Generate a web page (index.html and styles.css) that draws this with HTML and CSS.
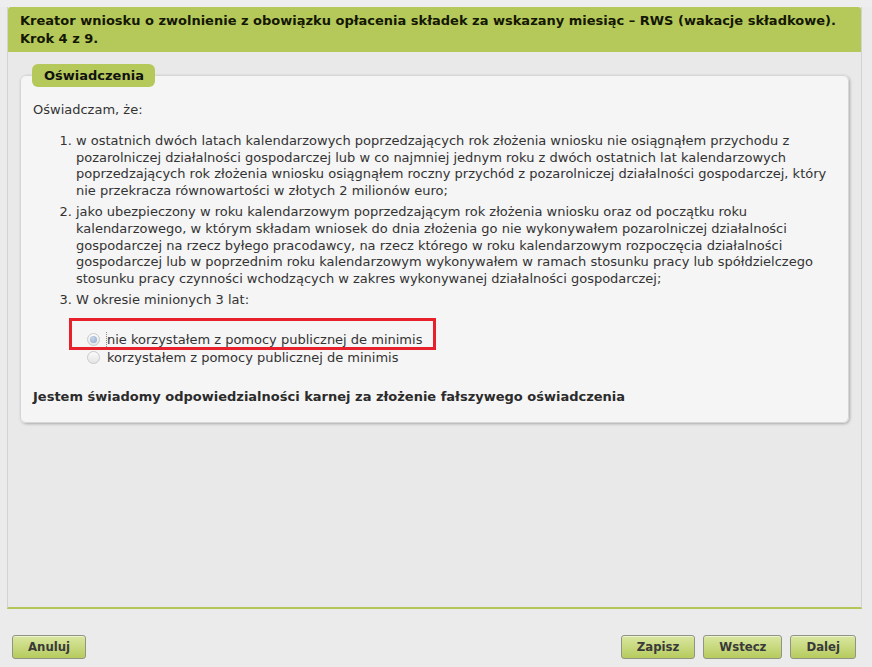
FILE: index.html
```html
<!DOCTYPE html>
<html lang="pl">
<head>
<meta charset="utf-8">
<title>Kreator wniosku RWS</title>
<link rel="stylesheet" href="styles.css">
</head>
<body>
<div class="topstrip"></div>
<div class="wizard">
  <div class="wizard-head">Kreator wniosku o zwolnienie z obowiązku opłacenia składek za wskazany miesiąc – RWS (wakacje składkowe). Krok 4 z 9.</div>
  <div class="wizard-body">
    <fieldset class="box">
      <legend class="box-title">Oświadczenia</legend>
      <p class="intro">Oświadczam, że:</p>
      <ol class="decl">
        <li>w ostatnich dwóch latach kalendarzowych poprzedzających rok złożenia wniosku nie osiągnąłem przychodu z pozarolniczej działalności gospodarczej lub w co najmniej jednym roku z dwóch ostatnich lat kalendarzowych poprzedzających rok złożenia wniosku osiągnąłem roczny przychód z pozarolniczej działalności gospodarczej, który nie przekracza równowartości w złotych 2 milionów euro;</li>
        <li>jako ubezpieczony w roku kalendarzowym poprzedzającym rok złożenia wniosku oraz od początku roku kalendarzowego, w którym składam wniosek do dnia złożenia go nie wykonywałem pozarolniczej działalności gospodarczej na rzecz byłego pracodawcy, na rzecz którego w roku kalendarzowym rozpoczęcia działalności gospodarczej lub w poprzednim roku kalendarzowym wykonywałem w ramach stosunku pracy lub spółdzielczego stosunku pracy czynności wchodzących w zakres wykonywanej działalności gospodarczej;</li>
        <li>W okresie minionych 3 lat:</li>
      </ol>
      <div class="choices">
        <label class="choice"><input type="radio" name="dm" checked disabled><span class="focus">nie korzystałem z pomocy publicznej de minimis</span></label>
        <label class="choice"><input type="radio" name="dm" disabled><span>korzystałem z pomocy publicznej de minimis</span></label>
        <div class="highlight"></div>
      </div>
      <p class="statement">Jestem świadomy odpowiedzialności karnej za złożenie fałszywego oświadczenia</p>
    </fieldset>
  </div>
</div>
<div class="actions">
  <button class="btn" type="button">Anuluj</button>
  <div class="actions-right">
    <button class="btn" type="button">Zapisz</button>
    <button class="btn" type="button">Wstecz</button>
    <button class="btn" type="button">Dalej</button>
  </div>
</div>
</body>
</html>
```

FILE: styles.css
```css
html, body {
  margin: 0;
  padding: 0;
}
body {
  background: #ebebeb;
  font-family: "DejaVu Sans", sans-serif;
  font-size: 13px;
  color: #333;
  height: 667px;
  overflow: hidden;
}
.topstrip {
  height: 7px;
  background: #eeeeee;
}
.wizard {
  margin: 0 10px 0 7px;
  border-left: 1px solid #d2d2d2;
  border-right: 1px solid #d2d2d2;
  border-bottom: 2px solid #b3c657;
  background: #e9e9e9;
}
.wizard-head {
  background: #b5c95a;
  border-radius: 3px 3px 0 0;
  color: #141703;
  font-weight: bold;
  font-size: 13px;
  line-height: 18px;
  padding: 5px 12px 4px 12px;
}
.wizard-body {
  padding: 12px 12px 184px 12px;
}
.box {
  margin: 0;
  padding: 0 12px 17px 12px;
  border: 1px solid #d6d6d6;
  border-radius: 6px;
  background: #f5f5f5;
  box-shadow: 1px 1px 3px rgba(0, 0, 0, 0.28);
  min-width: 0;
}
.box-title {
  background: #b5c95a;
  border-radius: 6px;
  padding: 0 11px 0 12px;
  margin-left: -1px;
  font-weight: bold;
  font-size: 13px;
  line-height: 23px;
  color: #111;
}
.intro {
  margin: 14px 0 0 0;
  line-height: 17px;
}
.decl {
  margin: 15px 0 0 0;
  padding-left: 43px;
  line-height: 16.6px;
}
.decl li + li {
  margin-top: 5px;
}
.choices {
  position: relative;
  margin: 21px 0 0 54px;
}
.choice {
  display: flex;
  align-items: center;
  gap: 7px;
  height: 18.3px;
  color: #333;
}
.choice input {
  appearance: none;
  -webkit-appearance: none;
  margin: 0;
  width: 13px;
  height: 13px;
  border-radius: 50%;
  border: 1px solid #c9c9c9;
  background: linear-gradient(#fbfbfb, #e4e4e4);
  box-sizing: border-box;
  position: relative;
}
.choice input:checked::after {
  content: "";
  position: absolute;
  left: 2px;
  top: 2px;
  width: 7px;
  height: 7px;
  border-radius: 50%;
  background: radial-gradient(circle at 40% 35%, #c7d6ea, #8ea7c9);
}
.focus {
  border-left: 1px dotted #888;
  margin-left: -1px;
}
.highlight {
  position: absolute;
  left: -18px;
  top: -12px;
  width: 361px;
  height: 26px;
  border: 3px solid #e8202c;
  pointer-events: none;
}
.statement {
  margin: 21px 0 0 0;
  font-weight: bold;
  font-size: 13px;
  line-height: 17px;
  color: #2b2b2b;
}
.actions {
  display: flex;
  justify-content: space-between;
  padding: 26px 16px 0 12px;
}
.actions-right {
  display: flex;
  gap: 8px;
}
.btn {
  font-family: "DejaVu Sans Condensed", "DejaVu Sans", sans-serif;
  font-weight: bold;
  font-size: 13px;
  color: #3a3a3a;
  height: 24px;
  padding: 0 15px;
  border: 1px solid #8f9484;
  border-radius: 3px;
  background: linear-gradient(#d9e7a0, #b6cb5e);
  box-shadow: inset 0 1px 0 rgba(255, 255, 255, 0.5);
  cursor: pointer;
}
```
